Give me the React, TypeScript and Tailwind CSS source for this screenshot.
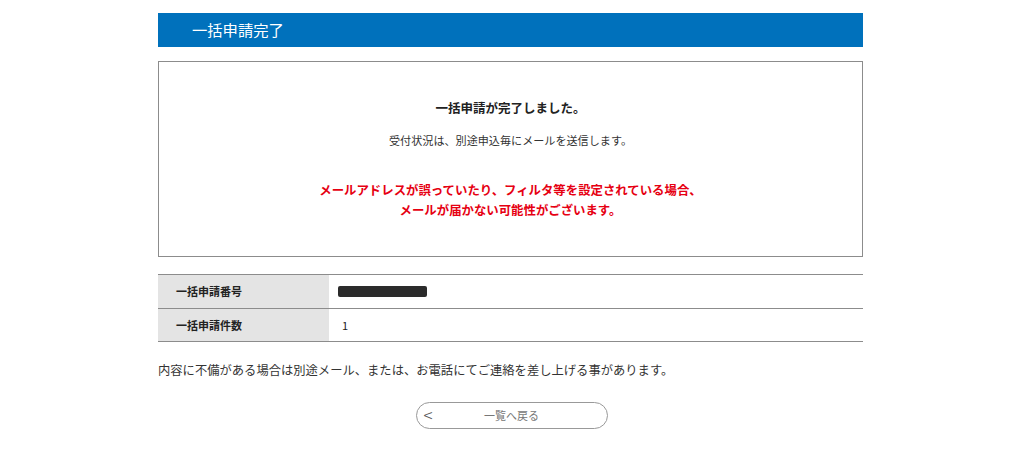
const FONT = "font-['Noto_Sans_CJK_JP','Noto_Sans',sans-serif]"

const ROWS = [
  { label: '一括申請番号', value: null },
  { label: '一括申請件数', value: '1' },
]

export default function App() {
  return (
    <div className={`min-h-[451px] bg-white text-[#222] ${FONT}`}>
      <div className="ml-[158px] w-[705px] pt-[13px]">
        {/* Title bar */}
        <div className="flex h-[34px] items-center bg-[#0071bc] pl-[34px]">
          <h1 className="text-[15.3px] leading-none text-white">一括申請完了</h1>
        </div>

        {/* Completion message */}
        <div className="mt-[14px] flex h-[196px] flex-col items-center border border-[#8c8c8c] pt-[38px] text-center">
          <p className="text-[12.5px] font-bold leading-[16px]">一括申請が完了しました。</p>
          <p className="mt-[16px] text-[11.1px] leading-[16px] text-[#333]">
            受付状況は、別途申込毎にメールを送信します。
          </p>
          <p className="mt-[32px] text-[12.4px] font-bold leading-[20px] text-[#e60012]">
            メールアドレスが誤っていたり、フィルタ等を設定されている場合、
            <br />
            メールが届かない可能性がございます。
          </p>
        </div>

        {/* Summary table */}
        <div className="mt-[17px] border-b border-t border-[#8c8c8c]">
          {ROWS.map((row, i) => (
            <div
              key={row.label}
              className={`flex h-[33px] ${i > 0 ? 'border-t border-[#8c8c8c]' : ''}`}
            >
              <div className="flex w-[171px] items-center bg-[#e4e4e4] pl-[18px] text-[11px] font-bold">
                {row.label}
              </div>
              <div className="flex flex-1 items-center pl-[9px] text-[11px]">
                {row.value ? (
                  <span className="pl-[4px]">{row.value}</span>
                ) : (
                  <span className="block h-[11px] w-[89px] rounded-[2px] bg-[#2b2b2b]" />
                )}
              </div>
            </div>
          ))}
        </div>

        <p className="mt-[19px] text-[12.3px] leading-[18px] text-[#333]">
          内容に不備がある場合は別途メール、または、お電話にてご連絡を差し上げる事があります。
        </p>

        {/* Back button */}
        <div className="mt-[23px] flex justify-center pl-[2px]">
          <button className="relative flex h-[27px] w-[192px] items-center justify-center rounded-full border border-[#999] text-[11px] text-[#777]">
            <span className="absolute left-[7px] top-[3px] text-[17px] font-light leading-none text-[#555]">&lt;</span>
            一覧へ戻る
          </button>
        </div>
      </div>
    </div>
  )
}
